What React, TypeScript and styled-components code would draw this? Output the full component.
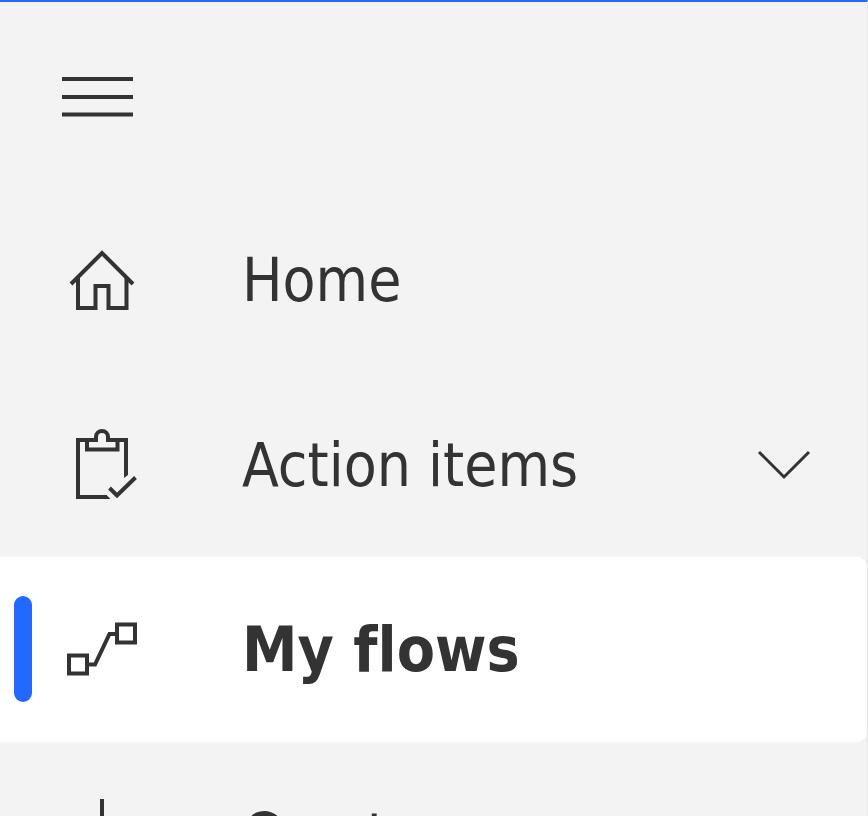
import React, { useState } from "react";
import styled, { createGlobalStyle } from "styled-components";

const GlobalStyle = createGlobalStyle`
  *, *::before, *::after { box-sizing: border-box; }
  body { margin: 0; background: #f3f3f3; }
`;

const Sidebar = styled.nav`
  height: 100vh;
  overflow: hidden;
  background: #f3f3f3;
  border-top: 2px solid #2469ff;
  border-right: 1px solid #e6e6e6;
  color: #333;
  font-family: "DejaVu Sans Condensed", "Noto Sans", sans-serif;
`;

const Header = styled.header`
  display: flex;
  height: 185px;
  padding-left: 62px;
`;

const MenuButton = styled.button`
  display: flex;
  align-items: center;
  padding: 0;
  border: 0;
  background: none;
  color: inherit;
  cursor: pointer;
`;

const NavList = styled.ul`
  margin: 0;
  padding: 0;
  list-style: none;
`;

const NavItem = styled.a<{ $active: boolean }>`
  position: relative;
  display: flex;
  align-items: center;
  height: 185px;
  padding: 0 56px 0 66px;
  border-radius: 0 10px 10px 0;
  background: ${(p) => (p.$active ? "#fff" : "transparent")};
  color: inherit;
  text-decoration: none;

  &::before {
    content: "";
    display: ${(p) => (p.$active ? "block" : "none")};
    position: absolute;
    left: 14px;
    top: 39px;
    bottom: 40px;
    width: 18px;
    border-radius: 9px;
    background: #2469ff;
  }
`;

const Label = styled.span<{ $active: boolean }>`
  flex: 1;
  margin-left: 104px;
  font-size: ${(p) => (p.$active ? 62 : 60)}px;
  line-height: 72px;
  font-weight: ${(p) => (p.$active ? 700 : 400)};
  font-variant-ligatures: none;
  white-space: nowrap;
`;

const Icon = styled.svg`
  flex: none;
  display: block;
  width: 72px;
  height: 73px;
  fill: none;
  stroke: currentColor;
  stroke-width: 4;
`;

const Chevron = styled.svg`
  flex: none;
  display: block;
  width: 54px;
  height: 30px;
  fill: none;
  stroke: currentColor;
  stroke-width: 3;
`;

const icons = {
  home: (
    <>
      <path d="M12 35V65H29.5V43H42.5V65H60.5V35" />
      <path d="M5 41L36 10L67 41" />
    </>
  ),
  tasks: (
    <>
      <path d="M60 47V12H42V9A6 6 0 0 0 30 9V12H12V69H40" />
      <path d="M40 67H40.5L44.5 71H40ZM58 47H62L58 50Z" fill="currentColor" stroke="none" />
      <path d="M21 12V21.5H51.5V12" />
      <path d="M43.5 60L51 67.5L69.5 49.5" />
    </>
  ),
  flow: (
    <>
      <rect x="3" y="42.5" width="18" height="18" />
      <rect x="51" y="11.5" width="18" height="18" />
      <path d="M21 51.5H29L43.5 21H51" />
    </>
  ),
  plus: <path d="M36 1V72M1 36.5H71" />,
};

type Item = { label: string; icon: keyof typeof icons; expandable?: boolean };

const items: Item[] = [
  { label: "Home", icon: "home" },
  { label: "Action items", icon: "tasks", expandable: true },
  { label: "My flows", icon: "flow" },
  { label: "Create", icon: "plus" },
];

export default function App() {
  const [active, setActive] = useState("My flows");
  return (
    <>
      <GlobalStyle />
      <Sidebar aria-label="Main">
        <Header>
          <MenuButton type="button" aria-label="Toggle navigation">
            <Icon viewBox="0 0 72 73" aria-hidden="true">
              <path d="M0 21H71M0 39H71M0 56.5H71" />
            </Icon>
          </MenuButton>
        </Header>
        <NavList>
          {items.map(({ label, icon, expandable }) => (
            <li key={label}>
              <NavItem
                href="#"
                $active={label === active}
                aria-current={label === active ? "page" : undefined}
                onClick={(e) => {
                  e.preventDefault();
                  setActive(label);
                }}
              >
                <Icon viewBox="0 0 72 73" aria-hidden="true">
                  {icons[icon]}
                </Icon>
                <Label $active={label === active}>{label}</Label>
                {expandable && (
                  <Chevron viewBox="0 0 54 30" aria-hidden="true">
                    <path d="M2 2L27 27L52 2" />
                  </Chevron>
                )}
              </NavItem>
            </li>
          ))}
        </NavList>
      </Sidebar>
    </>
  );
}
